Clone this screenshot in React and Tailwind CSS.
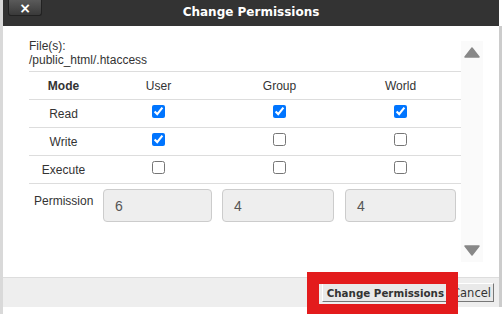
import React from "react";

const Check = ({ on }) => (
  <input
    type="checkbox"
    defaultChecked={on}
    readOnly
    className="w-[13px] h-[13px] m-0 block"
  />
);

const Row = ({ label, vals }) => (
  <div className="grid grid-cols-[69px_121px_121px_121px] h-[28px] border-b border-[#dddddd] items-center">
    <div className="text-center">{label}</div>
    {vals.map((v, i) => (
      <div key={i} className="flex justify-center -mt-[4px]">
        <Check on={v} />
      </div>
    ))}
  </div>
);

export default function App() {
  return (
    <div
      className="relative w-[502px] h-[314px] bg-white flex overflow-hidden text-[#333] text-[12px] leading-[14px]"
      style={{ fontFamily: '"Liberation Sans", Arial, sans-serif' }}
    >
      <div className="w-[3px] bg-[#d9d9d9] shrink-0" />
      <div className="flex-1 flex flex-col">
        {/* Title bar */}
        <div className="relative h-[26px] bg-[#333333] flex items-center justify-center shrink-0">
          <div className="absolute left-[5px] top-0 w-[34px] h-[16px] rounded-b-[3px] border border-t-0 border-[#222] bg-gradient-to-b from-[#5a5a5a] to-[#3a3a3a] flex items-center justify-center">
            <span
              className="text-white font-bold text-[14px] leading-[14px]"
              style={{ fontFamily: '"DejaVu Sans", Verdana, sans-serif' }}
            >
              ×
            </span>
          </div>
          <span
            className="text-white font-bold text-[12px] leading-[14px] -mt-[2px]"
            style={{ fontFamily: '"DejaVu Sans", Verdana, sans-serif' }}
          >
            Change Permissions
          </span>
        </div>

        {/* Body */}
        <div className="flex-1 flex">
          <div className="w-[458px] pl-[26px] pt-[13px]">
            <div className="w-[432px]">
              <div className="border-b border-[#dddddd] pb-[4px]">
                <div>File(s):</div>
                <div>/public_html/.htaccess</div>
              </div>
              <div className="grid grid-cols-[69px_121px_121px_121px] h-[28px] border-b border-[#dddddd] items-center">
                <div className="text-center font-bold">Mode</div>
                <div className="text-center">User</div>
                <div className="text-center">Group</div>
                <div className="text-center">World</div>
              </div>
              <Row label="Read" vals={[true, true, true]} />
              <Row label="Write" vals={[true, false, false]} />
              <Row label="Execute" vals={[false, false, false]} />
              <div className="flex pt-[5px]">
                <div className="w-[74px] pl-[5px] pt-[5px]">Permission</div>
                {["6", "4", "4"].map((v, i) => (
                  <div
                    key={i}
                    className={`h-[33px] bg-[#eeeeee] border border-[#cccccc] rounded-[4px] pl-[11px] flex items-center text-[14px] text-[#555] ${
                      i === 0 ? "w-[109px]" : i === 1 ? "w-[112px] ml-[10px]" : "w-[111px] ml-[11px]"
                    }`}
                  >
                    {v}
                  </div>
                ))}
              </div>
            </div>
          </div>
          <div className="w-[22px] mt-[15px] h-[221px] bg-[#fafafa] flex flex-col justify-between items-center py-[6px]">
            <svg width="16" height="11" viewBox="0 0 16 11">
              <path d="M8 1 L15 10 L1 10 Z" fill="#888" stroke="#888" strokeWidth="1.5" strokeLinejoin="round" />
            </svg>
            <svg width="16" height="11" viewBox="0 0 16 11">
              <path d="M1 1 L15 1 L8 10 Z" fill="#888" stroke="#888" strokeWidth="1.5" strokeLinejoin="round" />
            </svg>
          </div>
          <div className="flex-1" />
        </div>

        {/* Footer */}
        <div className="h-[30px] bg-[#eeeeee] border-t border-[#dddddd] flex items-center justify-end pr-[5px] shrink-0">
          <button
            className="h-[19px] px-[4px] bg-[#e9e9e9] border border-t-white border-l-white border-r-[#777] border-b-[#777] font-bold text-[10.3px] leading-[12px] text-[#333]"
            style={{ fontFamily: '"DejaVu Sans", Verdana, sans-serif' }}
          >
            Change Permissions
          </button>
          <button
            className="h-[19px] px-[2px] bg-[#e9e9e9] border border-t-white border-l-white border-r-[#777] border-b-[#777] text-[11.5px] leading-[12px] text-[#333]"
            style={{ fontFamily: '"DejaVu Sans", Verdana, sans-serif' }}
          >
            Cancel
          </button>
        </div>
        <div className="h-[7px] bg-white shrink-0" />
      </div>
      <div className="w-[3px] bg-[#cccccc] shrink-0 mt-[26px] mb-[7px]" />

      {/* Red annotation box */}
      <div className="absolute left-[307px] top-[272px] w-[151px] h-[44px] border-[12px] border-[#e31b1c] pointer-events-none" />
    </div>
  );
}
